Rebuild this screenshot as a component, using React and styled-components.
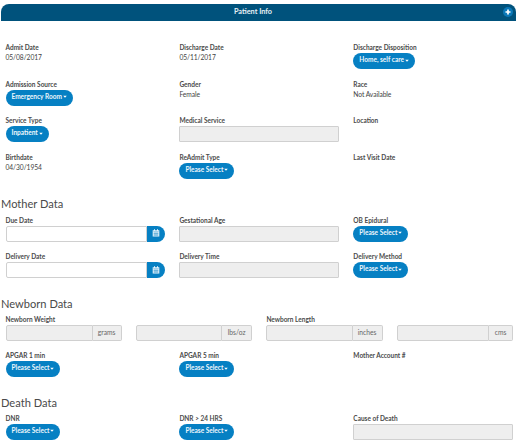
import React from "react";
import styled, { createGlobalStyle } from "styled-components";

const GlobalStyle = createGlobalStyle`
  * { box-sizing: border-box; }
  body { margin: 0; background: #fff; font-family: Lato, "Liberation Sans", sans-serif; color: #444; overflow: hidden; }
`;

const Page = styled.main`
  width: 516px;
  height: 447px;
  padding: 4px 0 0 1px;
`;

const TitleBar = styled.header`
  display: grid;
  grid-template-columns: 1fr auto 1fr;
  align-items: center;
  height: 17px;
  margin-bottom: 22px;
  padding: 0 3px 0 0;
  border-radius: 8px 8px 0 0;
  background: #00527c;
  color: #e8f1f6;
`;

const Title = styled.h1`
  grid-column: 2;
  margin: 0 8px 2px 0;
  font-size: 7.3px;
  line-height: 10px;
  font-weight: 700;
`;

const AddButton = styled.button`
  justify-self: end;
  display: grid;
  place-items: center;
  width: 10px;
  height: 10px;
  margin-bottom: 1px;
  padding: 0;
  border: 0;
  border-radius: 50%;
  background: #0a78b8;
`;

const SectionTitle = styled.h2`
  height: ${(p) => p.$height}px;
  margin: 0;
  padding-top: 7px;
  font-size: 11.1px;
  line-height: 16px;
  font-weight: 400;
  color: #4a4a4a;
`;

const Row = styled.div`
  display: grid;
  grid-template-columns: repeat(${(p) => p.$columns || 3}, 1fr);
  column-gap: 14.3px;
  height: 36.5px;
  padding: 0 3px 0 4.5px;
`;

const Field = styled.div`
  display: flex;
  flex-direction: column;
  align-items: flex-start;
  min-width: 0;
`;

const Label = styled.label`
  height: 10.2px;
  font-size: 6.5px;
  line-height: 10.5px;
  font-weight: 700;
  color: #4b4b4b;
  white-space: nowrap;
`;

const Value = styled.span`
  margin-top: -0.8px;
  font-size: 6.7px;
  line-height: 10px;
  letter-spacing: -0.08px;
`;

const Select = styled.button`
  display: flex;
  align-items: center;
  gap: 1px;
  height: 16px;
  padding: 0 6px 1.5px;
  border: 0;
  border-radius: 8px;
  background: #0680c3;
  color: #eef7fc;
  font-family: inherit;
  font-size: 6.5px;
  font-weight: 700;
  line-height: 10px;
  white-space: nowrap;
`;

const Group = styled.div`
  display: flex;
  width: 100%;
  height: 16px;
`;

const Input = styled.input`
  flex: 1;
  min-width: 0;
  height: 16px;
  padding: 0 4px;
  border: 1px solid #d0d0d0;
  border-radius: ${(p) => (p.$joined ? "2px 0 0 2px" : "1px")};
  background: ${(p) => (p.disabled ? "#eee" : "#fff")};
`;

const Unit = styled.span`
  display: grid;
  place-items: center;
  width: ${(p) => p.$width}px;
  padding-bottom: 2px;
  border: 1px solid #d0d0d0;
  border-left: 0;
  border-radius: 0 2px 2px 0;
  background: #eee;
  font-size: 6.7px;
  line-height: 10px;
  color: #666;
`;

const DateButton = styled.button`
  display: grid;
  place-items: center;
  width: 18.5px;
  height: 16px;
  padding: 0 0 1px;
  border: 0;
  border-radius: 0 8px 8px 0;
  background: #0680c3;
`;

const PlusIcon = () => (
  <svg width="6" height="6" viewBox="0 0 6 6" aria-hidden="true">
    <path d="M3 .5v5M.5 3h5" stroke="#fff" strokeWidth="1.7" />
  </svg>
);

const CaretIcon = () => (
  <svg width="4" height="3" viewBox="0 0 4 3" aria-hidden="true">
    <path d="M.2.8h3.6L2 2.8z" fill="#fff" />
  </svg>
);

const CalendarIcon = () => (
  <svg width="8" height="8" viewBox="0 0 8 8" aria-hidden="true">
    <path d="M.7 1.3h6.6v6.2H.7zM2 .3h1v1.4H2zM5 .3h1v1.4H5z" fill="#e9f5fc" />
    <path d="M1.3 2.8h5.4M1.5 4.6h5M1.5 6.1h5M3 3.4v3.4M5 3.4v3.4" stroke="#0680c3" strokeWidth=".45" />
  </svg>
);

function Item({ label, value, select, input, date, unit, unitWidth }) {
  return (
    <Field>
      <Label>{label}</Label>
      {value && <Value>{value}</Value>}
      {select && <Select>{select}<CaretIcon /></Select>}
      {input && <Group><Input disabled /></Group>}
      {date && <Group><Input $joined /><DateButton aria-label="Pick date"><CalendarIcon /></DateButton></Group>}
      {unit && <Group><Input $joined disabled /><Unit $width={unitWidth}>{unit}</Unit></Group>}
    </Field>
  );
}

export default function App() {
  return (
    <Page>
      <GlobalStyle />
      <TitleBar>
        <Title>Patient Info</Title>
        <AddButton aria-label="Add"><PlusIcon /></AddButton>
      </TitleBar>
      <Row>
        <Item label="Admit Date" value="05/08/2017" />
        <Item label="Discharge Date" value="05/11/2017" />
        <Item label="Discharge Disposition" select="Home, self care" />
      </Row>
      <Row>
        <Item label="Admission Source" select="Emergency Room" />
        <Item label="Gender" value="Female" />
        <Item label="Race" value="Not Available" />
      </Row>
      <Row>
        <Item label="Service Type" select="Inpatient" />
        <Item label="Medical Service" input />
        <Item label="Location" />
      </Row>
      <Row>
        <Item label="Birthdate" value="04/30/1954" />
        <Item label="ReAdmit Type" select="Please Select" />
        <Item label="Last Visit Date" />
      </Row>
      <SectionTitle $height={26.5}>Mother Data</SectionTitle>
      <Row>
        <Item label="Due Date" date />
        <Item label="Gestational Age" input />
        <Item label="OB Epidural" select="Please Select" />
      </Row>
      <Row>
        <Item label="Delivery Date" date />
        <Item label="Delivery Time" input />
        <Item label="Delivery Method" select="Please Select" />
      </Row>
      <SectionTitle $height={26}>Newborn Data</SectionTitle>
      <Row $columns={4}>
        <Item label="Newborn Weight" unit="grams" unitWidth={29} />
        <Item unit="lbs/oz" unitWidth={30} />
        <Item label="Newborn Length" unit="inches" unitWidth={30} />
        <Item unit="cms" unitWidth={24} />
      </Row>
      <Row>
        <Item label="APGAR 1 min" select="Please Select" />
        <Item label="APGAR 5 min" select="Please Select" />
        <Item label="Mother Account #" />
      </Row>
      <SectionTitle $height={26}>Death Data</SectionTitle>
      <Row>
        <Item label="DNR" select="Please Select" />
        <Item label="DNR > 24 HRS" select="Please Select" />
        <Item label="Cause of Death" input />
      </Row>
    </Page>
  );
}
